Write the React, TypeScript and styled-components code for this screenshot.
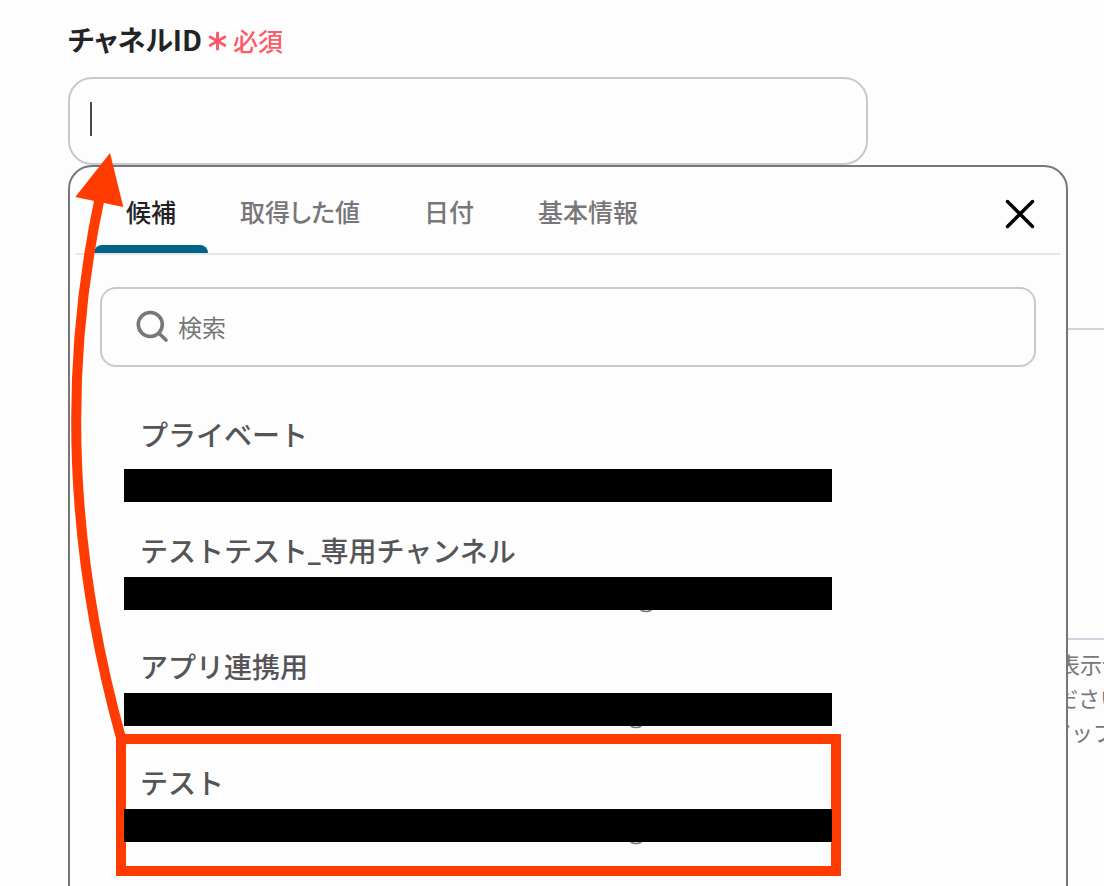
import React from "react";
import styled, { createGlobalStyle } from "styled-components";

const GlobalStyle = createGlobalStyle`
  *, *::before, *::after { box-sizing: border-box; }
  body {
    margin: 0;
    background: #fdfdfd;
    color: #232325;
    font-family: "Noto Sans CJK JP", sans-serif;
  }
  button, input, textarea { font: inherit; color: inherit; }
`;

const Page = styled.main`
  position: relative;
  height: 100vh;
  padding: 20px 36px 0 68px;
  overflow: hidden;
`;

const Field = styled.div`
  position: relative;
`;

const FieldHeading = styled.div`
  display: flex;
  align-items: center;
  gap: 6px;
  height: 40px;
  margin-bottom: 17px;
`;

const FieldLabel = styled.label`
  padding-bottom: 2px;
  font-size: 28px;
  line-height: 38px;
  font-weight: 700;
  font-feature-settings: "palt";
`;

const Required = styled.span`
  display: flex;
  align-items: center;
  gap: 6px;
  color: #ff5a67;
  font-size: 25px;
  line-height: 40px;
  font-weight: 500;
`;

const InputShell = styled.div`
  display: flex;
  align-items: center;
  width: 80%;
  height: 88px;
  padding: 0 20px;
  border: 2px solid #c9c9cb;
  border-radius: 24px;

  &::before {
    content: "";
    width: 2px;
    height: 34px;
    margin-bottom: 4px;
    background: #4a4a4a;
  }
`;

const BareInput = styled.input`
  flex: 1;
  min-width: 0;
  padding: 0 0 2px;
  border: 0;
  outline: 0;
  background: transparent;
  font-size: 24px;

  &::placeholder {
    color: #777;
    opacity: 1;
  }
`;

const Popover = styled.section`
  position: absolute;
  top: 100%;
  left: 0;
  right: 0;
  z-index: 2;
  padding-bottom: 120px;
  border: 2px solid #77777a;
  border-radius: 24px;
  background: #fdfdfd;
`;

const PopoverHeader = styled.header`
  display: flex;
  align-items: stretch;
  justify-content: space-between;
  height: 88px;
  margin: 0 6px;
  padding: 0 22px 0 18px;
  border-bottom: 2px solid #e5e5e6;
`;

const Tabs = styled.div`
  display: flex;
`;

const Tab = styled.button<{ $active?: boolean }>`
  position: relative;
  padding: 2px 32px 0;
  border: 0;
  background: none;
  color: ${(p) => (p.$active ? "#232325" : "#777779")};
  font-size: 25px;
  line-height: 32px;
  font-weight: 500;
  font-feature-settings: "palt";

  &::after {
    content: "";
    display: ${(p) => (p.$active ? "block" : "none")};
    position: absolute;
    left: 0;
    right: 0;
    bottom: 0;
    height: 8px;
    border-radius: 8px 8px 0 0;
    background: #006388;
  }
`;

const CloseButton = styled.button`
  display: flex;
  align-items: center;
  padding: 8px 0 0;
  border: 0;
  background: none;
`;

const SearchBox = styled.label`
  display: flex;
  align-items: center;
  gap: 8px;
  height: 80px;
  margin: 32px 30px 50px;
  padding: 0 32px;
  border: 2px solid #c9c9cb;
  border-radius: 16px;
`;

const Options = styled.ul`
  margin: 0;
  padding: 0 54px;
  list-style: none;
`;

const Option = styled.li`
  position: relative;
  max-width: 708px;
  height: 116px;
`;

const OptionButton = styled.button`
  display: block;
  width: 100%;
  padding: 0 16px;
  border: 0;
  background: none;
  color: #555557;
  font-family: Roboto, "Noto Sans CJK JP", sans-serif;
  font-size: 28px;
  line-height: 40px;
  font-weight: 500;
  text-align: left;
`;

const Redaction = styled.div<{ $loose?: boolean }>`
  position: relative;
  z-index: 1;
  height: 33px;
  margin-top: ${(p) => (p.$loose ? 12 : 4)}px;
  background: #000;
`;

const Descender = styled.svg<{ $at: number }>`
  position: absolute;
  top: 100%;
  left: ${(p) => p.$at}px;
`;

const Highlight = styled.div`
  position: absolute;
  inset: -31px -9px 5px -8px;
  border: 10px solid #ff3b00;
  pointer-events: none;
`;

const Arrow = styled.svg`
  position: absolute;
  top: -14px;
  left: -2px;
  z-index: 3;
  pointer-events: none;
`;

const Behind = styled.div`
  margin: 163px -36px 0 0;
`;

const MessageBox = styled.textarea`
  display: block;
  width: 100%;
  height: 312px;
  border: 2px solid #d0d4de;
  border-width: 2px 0;
  outline: 0;
  background: transparent;
  resize: none;
`;

const Help = styled.p`
  display: flex;
  flex-direction: column;
  align-items: flex-end;
  margin: 6px 0 0;
  color: #777779;
  font-size: 22px;
  line-height: 34px;
  white-space: nowrap;
`;

const HelpLine = styled.span<{ $visible: number }>`
  width: ${(p) => p.$visible}px;
`;

type Item = { name: string; loose?: boolean; mark?: number; selected?: boolean };

const items: Item[] = [
  { name: "プライベート", loose: true },
  { name: "テストテスト_専用チャンネル", mark: 516 },
  { name: "アプリ連携用", mark: 506 },
  { name: "テスト", mark: 506, selected: true },
];

const tabs = ["候補", "取得した値", "日付", "基本情報"];

export default function App() {
  return (
    <>
      <GlobalStyle />
      <Page>
        <Field>
          <FieldHeading>
            <FieldLabel htmlFor="channel">チャネルID</FieldLabel>
            <Required>
              <svg width="19" height="24" viewBox="0 0 19 24" fill="none" stroke="currentColor" strokeWidth="3" strokeLinecap="round" aria-hidden="true">
                <path d="M9.500 5v16M2.200 9l14.600 8.200M16.800 9l-14.600 8.200" />
              </svg>
              必須
            </Required>
          </FieldHeading>
          <InputShell>
            <BareInput id="channel" type="text" />
          </InputShell>

          <Popover>
            <PopoverHeader>
              <Tabs role="tablist">
                {tabs.map((t, i) => (
                  <Tab key={t} type="button" role="tab" aria-selected={i === 0} $active={i === 0}>
                    {t}
                  </Tab>
                ))}
              </Tabs>
              <CloseButton type="button" aria-label="閉じる">
                <svg width="36" height="36" viewBox="0 0 36 36" fill="none" stroke="#000" strokeWidth="3.4" strokeLinecap="round">
                  <path d="M5.500 5.500l25 25M30.500 5.500l-25 25" />
                </svg>
              </CloseButton>
            </PopoverHeader>

            <SearchBox>
              <svg width="36" height="36" viewBox="0 0 36 36" fill="none" stroke="#777779" strokeWidth="3.600" strokeLinecap="round" aria-hidden="true">
                <circle cx="16.300" cy="15.500" r="12" />
                <path d="M25.200 24.500l6.800 6.500" />
              </svg>
              <BareInput type="search" placeholder="検索" aria-label="検索" />
            </SearchBox>

            <Options>
              {items.map((item) => (
                <Option key={item.name}>
                  {item.selected && <Highlight />}
                  <OptionButton type="button">{item.name}</OptionButton>
                  <Redaction $loose={item.loose}>
                    {item.mark && (
                      <Descender $at={item.mark} width="12" height="3" viewBox="0 0 12 3" fill="none" stroke="#777779" strokeWidth="1.500">
                        <path d="M0.500 0Q6 3 11.500 0" />
                      </Descender>
                    )}
                  </Redaction>
                </Option>
              ))}
            </Options>

            <Arrow width="60" height="600" viewBox="68 153 60 600" aria-hidden="true">
              <path d="M99.300 200Q44 460 121 738" fill="none" stroke="#ff3b00" strokeWidth="10" />
              <path d="M110 153L75.300 197L123.300 207Z" fill="#ff3b00" />
            </Arrow>
          </Popover>
        </Field>

        <Behind>
          <MessageBox aria-label="メッセージ" />
          <Help>
            <HelpLine $visible={46}>表示せず</HelpLine>
            <HelpLine $visible={48}>ださい。</HelpLine>
            <HelpLine $visible={55}>アップ</HelpLine>
          </Help>
        </Behind>
      </Page>
    </>
  );
}
